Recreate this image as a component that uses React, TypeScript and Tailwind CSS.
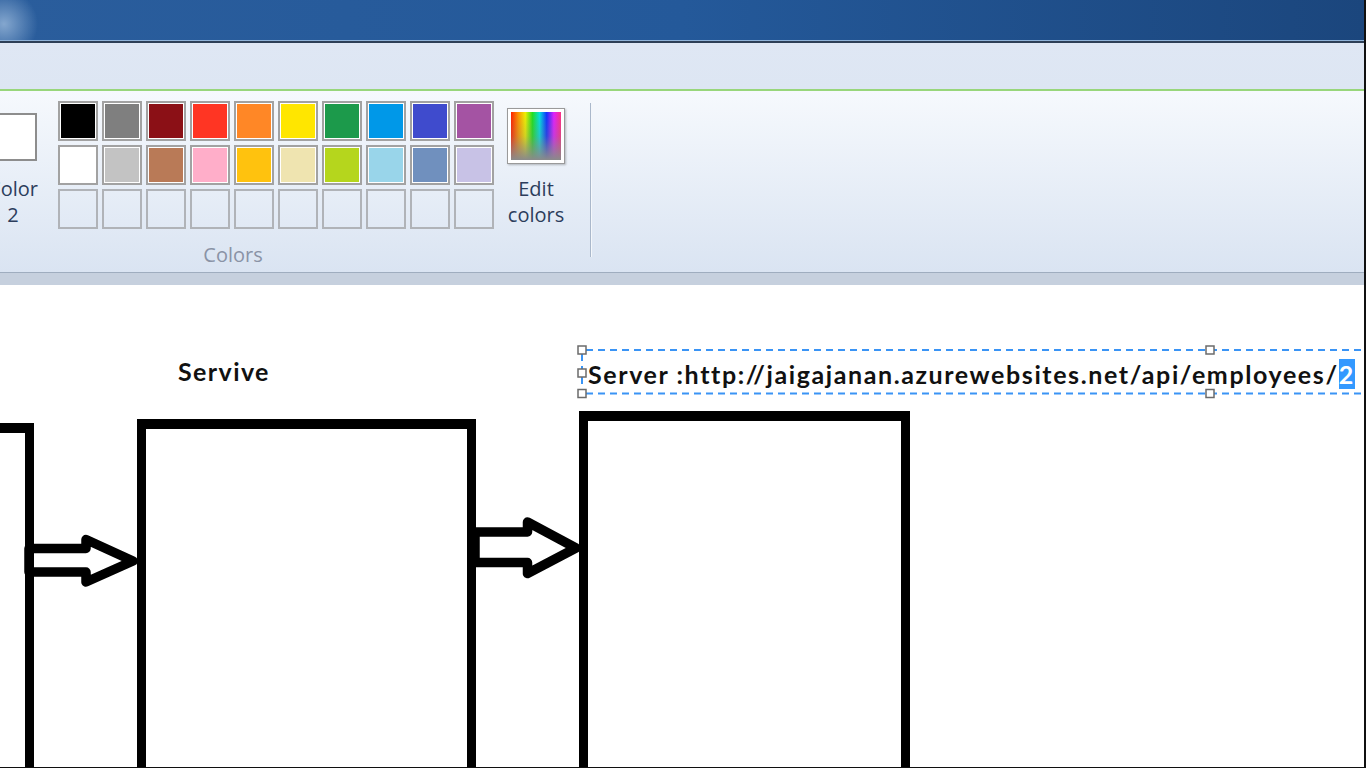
import React from "react";

const row1 = ["#000000", "#7f7f7f", "#8b1016", "#ff3523", "#ff8726", "#ffe600", "#1c9a4b", "#0098e8", "#3f4bcd", "#a453a3"];
const row2 = ["#ffffff", "#c3c3c3", "#b97a57", "#ffaec9", "#ffc20e", "#efe4b0", "#b5d61d", "#99d5ea", "#7090be", "#c8c2e6"];

const Swatch = ({ color }: { color?: string }) =>
  color ? (
    <div className="h-10 w-10 border-2 border-[#a2a2a2] bg-white p-[1px]">
      <div className="h-full w-full" style={{ backgroundColor: color }} />
    </div>
  ) : (
    <div className="h-10 w-10 border-2 border-[#b0b3b8]" />
  );

const TitleBar = () => (
  <>
    <div className="relative h-[40px] overflow-hidden bg-gradient-to-r from-[#2a5d9c] via-[#24599a] to-[#1b467d]">
      <div className="absolute left-[-34px] top-[-6px] h-[60px] w-[76px] rounded-full bg-[radial-gradient(circle,rgba(170,198,228,0.7),rgba(170,198,228,0)_70%)]" />
    </div>
    <div className="h-px bg-[#8fb2d8]" />
    <div className="h-[2px] bg-[#2d3f57]" />
    <div className="h-[46px] bg-gradient-to-b from-[#dfe7f4] to-[#dde6f3]" />
    <div className="h-[2px] bg-[#98d67b]" />
  </>
);

const Ribbon = () => (
  <>
    <div className="flex h-[181px] bg-gradient-to-b from-[#f6f9fd] to-[#dae4f2] pt-[10px] text-[20px] text-[#2c3d5c]">
      <div className="flex flex-col">
        <div className="flex">
          <div className="ml-[-17px] flex w-[60px] flex-col items-center">
            <div className="mt-[12px] h-[48px] w-[48px] border-2 border-[#8d8d8d] bg-white" />
            <div className="mt-[15px] text-center leading-[26px]">
              Color
              <br />2
            </div>
          </div>
          <div className="ml-[15px] grid grid-cols-10 gap-[4px]">
            {row1.map((c) => (
              <Swatch key={"a" + c} color={c} />
            ))}
            {row2.map((c) => (
              <Swatch key={"b" + c} color={c} />
            ))}
            {row1.map((c) => (
              <Swatch key={"e" + c} />
            ))}
          </div>
          <div className="ml-[6px] flex w-[72px] flex-col items-center">
            <div className="mt-[7px] h-[56px] w-[58px] border border-[#9a9a9a] bg-white p-[3px] shadow-[1px_1px_2px_rgba(0,0,0,0.25)]">
              <div className="relative h-full w-full bg-[linear-gradient(to_right,#ff2000,#ff9000,#f0f000,#20e020,#00e0e0,#1030ff,#e020ff,#ff3080)]">
                <div className="absolute inset-0 bg-gradient-to-b from-transparent via-[rgba(128,128,128,0.25)] to-[#8a8a8a]" />
              </div>
            </div>
            <div className="mt-[12px] text-center leading-[26px]">
              Edit
              <br />
              colors
            </div>
          </div>
        </div>
        <div className="mt-[13px] w-[466px] text-center text-[20px] leading-[26px] text-[#8a93a6]">Colors</div>
      </div>
      <div className="ml-[18px] mt-[2px] flex h-[154px]">
        <div className="w-px bg-[#aab8cb]" />
        <div className="w-px bg-[#f4f7fb]" />
      </div>
    </div>
    <div className="h-px bg-[#9fadbf]" />
    <div className="h-[12px] bg-[#c6d0de]" />
  </>
);

const Canvas = () => (
  <div className="relative flex-1 overflow-hidden bg-white font-['Lato',sans-serif] text-[#111]">
    <svg className="absolute inset-0" width="1366" height="483" viewBox="0 0 1366 483">
      <polygon
        points="29,263.5 86,263.5 86,254.5 133,276 86,297 86,287 29,287"
        fill="white"
        stroke="black"
        strokeWidth="9.5"
        strokeLinejoin="round"
      />
      <polygon
        points="475,247 527.5,247 527.5,237 576,263 527.5,288.5 527.5,277.5 475,277.5"
        fill="white"
        stroke="black"
        strokeWidth="9.5"
        strokeLinejoin="round"
      />
      <g stroke="#3a94f5" strokeWidth="2" strokeDasharray="7 5" fill="none">
        <line x1="586" y1="65" x2="1366" y2="65" />
        <line x1="586" y1="108.5" x2="1366" y2="108.5" />
        <line x1="582" y1="69" x2="582" y2="84" />
        <line x1="582" y1="92" x2="582" y2="104" />
      </g>
      <g fill="white" stroke="#6b6b6b" strokeWidth="1.5">
        <rect x="578" y="61" width="8" height="8" />
        <rect x="578" y="84" width="8" height="8" />
        <rect x="578" y="104.5" width="8" height="8" />
        <rect x="1206" y="61" width="8" height="8" />
        <rect x="1206" y="104.5" width="8" height="8" />
      </g>
    </svg>
    <div className="absolute left-[-100px] top-[138px] h-[400px] w-[134px] border-[9px] border-t-[10px] border-b-0 border-black" />
    <div className="absolute left-[137px] top-[134px] h-[400px] w-[339px] border-[9px] border-t-[10px] border-b-0 border-black" />
    <div className="absolute left-[579px] top-[126px] h-[400px] w-[331px] border-[9px] border-t-[10px] border-b-0 border-black" />
    <div className="absolute left-[178px] top-[74px] text-[25px] font-bold leading-none tracking-[1.4px]">Servive</div>
    <div className="absolute left-[588px] top-[77px] whitespace-nowrap text-[25px] font-bold leading-none tracking-[1.6px]">
      Server :http://jaigajanan.azurewebsites.net/api/employees/
      <span className="bg-[#3399ff] text-white">2</span>
    </div>
  </div>
);

export default function App() {
  return (
    <div className="flex h-[768px] w-[1366px] flex-col overflow-hidden border-r-2 border-b border-[#101010] bg-white font-['Open_Sans',sans-serif]">
      <TitleBar />
      <Ribbon />
      <Canvas />
    </div>
  );
}
